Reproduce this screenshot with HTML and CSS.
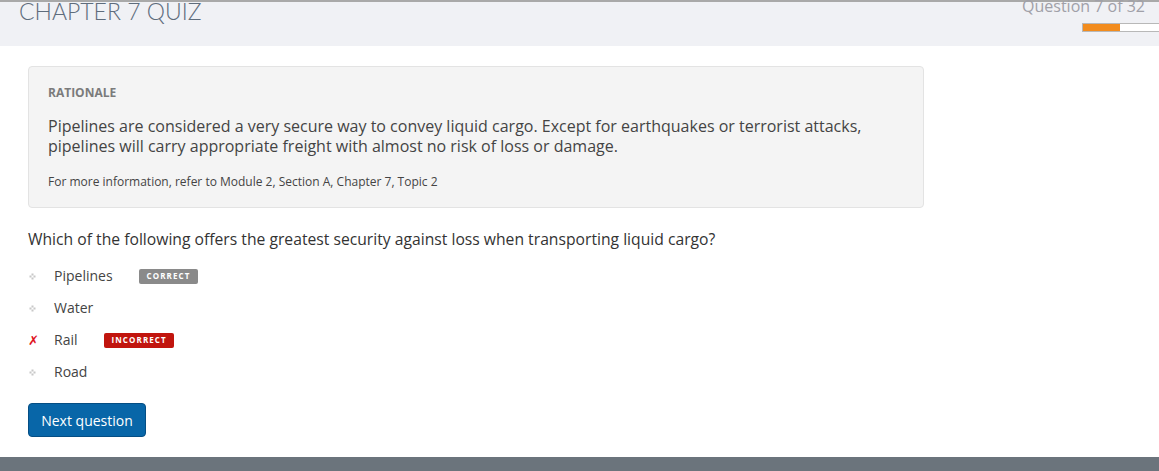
FILE: index.html
```html
<!DOCTYPE html>
<html>
<head>
<meta charset="utf-8">
<link rel="stylesheet" href="styles.css">
</head>
<body>
<header class="topbar">
  <h1 class="title">CHAPTER 7 QUIZ</h1>
  <div class="progress-wrap">
    <div class="qcount">Question 7 of 32</div>
    <div class="progress"><div class="progress-fill" style="width:37px"></div></div>
  </div>
</header>
<main class="content">
  <section class="rationale">
    <div class="rationale-label">RATIONALE</div>
    <p class="rationale-text">Pipelines are considered a very secure way to convey liquid cargo. Except for earthquakes or terrorist attacks, pipelines will carry appropriate freight with almost no risk of loss or damage.</p>
    <p class="rationale-ref">For more information, refer to Module 2, Section A, Chapter 7, Topic 2</p>
  </section>
  <p class="question">Which of the following offers the greatest security against loss when transporting liquid cargo?</p>
  <ul class="options">
    <li class="option"><span class="marker"><svg width="7" height="7" viewBox="0 0 7 7"><rect x="2.5" y="0.5" width="2" height="2" fill="#c8c8c8"/><rect x="0.5" y="2.5" width="2" height="2" fill="#c8c8c8"/><rect x="4.5" y="2.5" width="2" height="2" fill="#c8c8c8"/><rect x="2.5" y="4.5" width="2" height="2" fill="#c8c8c8"/></svg></span><span class="opt-text">Pipelines</span><span class="badge badge-correct">CORRECT</span></li>
    <li class="option"><span class="marker"><svg width="7" height="7" viewBox="0 0 7 7"><rect x="2.5" y="0.5" width="2" height="2" fill="#c8c8c8"/><rect x="0.5" y="2.5" width="2" height="2" fill="#c8c8c8"/><rect x="4.5" y="2.5" width="2" height="2" fill="#c8c8c8"/><rect x="2.5" y="4.5" width="2" height="2" fill="#c8c8c8"/></svg></span><span class="opt-text">Water</span></li>
    <li class="option"><span class="marker marker-x">✗</span><span class="opt-text">Rail</span><span class="badge badge-incorrect">INCORRECT</span></li>
    <li class="option"><span class="marker"><svg width="7" height="7" viewBox="0 0 7 7"><rect x="2.5" y="0.5" width="2" height="2" fill="#c8c8c8"/><rect x="0.5" y="2.5" width="2" height="2" fill="#c8c8c8"/><rect x="4.5" y="2.5" width="2" height="2" fill="#c8c8c8"/><rect x="2.5" y="4.5" width="2" height="2" fill="#c8c8c8"/></svg></span><span class="opt-text">Road</span></li>
  </ul>
  <button class="next-btn">Next question</button>
</main>
<footer class="footer"></footer>
</body>
</html>
```

FILE: styles.css
```css
* { box-sizing: border-box; }
html, body { margin: 0; padding: 0; }
body {
  font-family: "Open Sans", "Liberation Sans", sans-serif;
  color: #333;
  background: #fff;
  width: 1159px;
  height: 471px;
  overflow: hidden;
  display: flex;
  flex-direction: column;
}
.topbar {
  height: 46px;
  background: #f0f1f5;
  border-top: 2px solid #a9a9a9;
  display: flex;
  justify-content: space-between;
  padding: 0 0 0 19px;
}
.title {
  margin: -6px 0 0 0;
  font-family: Lato, "Open Sans", sans-serif;
  font-weight: 300;
  font-size: 23px;
  line-height: 30px;
  color: #5e6c7c;
}
.progress-wrap {
  display: flex;
  flex-direction: column;
  align-items: flex-end;
}
.qcount {
  margin-top: -7px;
  margin-right: 14px;
  font-size: 16px;
  line-height: 22px;
  color: #a0a0a8;
}
.progress {
  margin-top: 6px;
  width: 77px;
  height: 9px;
  border: 1px solid #b8b8b8;
  border-right: none;
  background: #fff;
  align-self: flex-start;
  margin-left: 62px;
}
.progress-fill {
  height: 100%;
  background: #f28c1e;
}
.content {
  flex: 1;
  padding: 20px 28px 0 28px;
}
.rationale {
  width: 896px;
  background: #f4f4f4;
  border: 1px solid #e3e3e3;
  border-radius: 4px;
  padding: 18px 19px 17px 19px;
}
.rationale-label {
  font-size: 12px;
  font-weight: 700;
  color: #7b7b7b;
  line-height: 16px;
}
.rationale-text {
  margin: 15px 0 0 0;
  font-size: 16px;
  line-height: 20px;
  color: #444;
}
.rationale-ref {
  margin: 18px 0 0 0;
  font-size: 12px;
  line-height: 16px;
  color: #444;
}
.question {
  margin: 20px 0 0 0;
  font-size: 15.7px;
  line-height: 22px;
  color: #333;
}
.options {
  list-style: none;
  margin: 10px 0 0 0;
  padding: 0;
}
.option {
  display: flex;
  align-items: center;
  height: 32px;
  font-size: 14px;
  color: #444;
}
.marker {
  width: 26px;
  display: flex;
  align-items: center;
  padding-left: 1px;
}
.marker-x {
  color: #e0141e;
  font-family: "DejaVu Sans", sans-serif;
  font-size: 13px;
  font-weight: 700;
  font-style: italic;
  padding-left: 0;
}
.opt-text {
  line-height: 20px;
}
.badge {
  display: inline-block;
  font-size: 8px;
  font-weight: 700;
  letter-spacing: 1.1px;
  color: #fff;
  line-height: 14px;
  height: 15px;
  padding: 0 7px 0 8px;
  border-radius: 2px;
}
.badge-correct {
  background: #8a8a8a;
  margin-left: 26px;
}
.badge-incorrect {
  background: #c1150e;
  margin-left: 26px;
}
.next-btn {
  margin-top: 15px;
  font-family: "Open Sans", "Liberation Sans", sans-serif;
  font-size: 14px;
  color: #fff;
  background: #0866a8;
  border: 1px solid #054e84;
  border-radius: 4px;
  width: 118px;
  height: 34px;
  padding: 0;
  cursor: pointer;
}
.footer {
  height: 14px;
  background: #6b747c;
}
```
